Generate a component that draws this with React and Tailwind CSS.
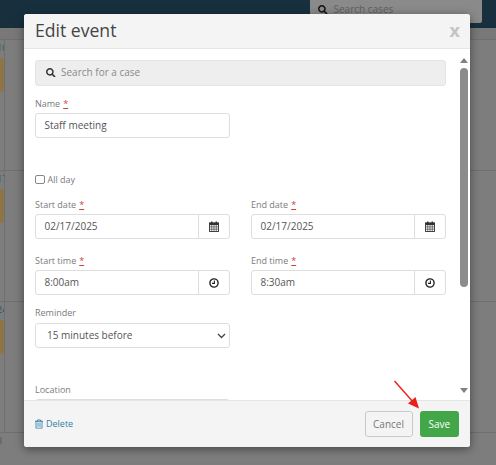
import React from "react";
import { FaSearch, FaRegTrashAlt } from "react-icons/fa";

const Label = ({ children, req }) => (
  <div className="h-[12px] text-[9px] leading-[12px] text-[#7b7b7b]">
    {children}
    {req && <span className="ml-[3px] text-[#c9453f] underline">*</span>}
  </div>
);

const Calendar = () => (
  <svg width="10" height="11" viewBox="0 0 11 12" className="text-[#333]">
    <rect x="0.5" y="2" width="10" height="9.5" fill="none" stroke="currentColor" />
    <rect x="0.5" y="2" width="10" height="2.5" fill="currentColor" />
    <rect x="2.2" y="0.5" width="1.6" height="2.5" fill="currentColor" />
    <rect x="7.2" y="0.5" width="1.6" height="2.5" fill="currentColor" />
    <path d="M0.5 6.5H10.5M0.5 9H10.5M3 4.5V11.5M5.5 4.5V11.5M8 4.5V11.5" stroke="currentColor" strokeWidth="0.7" />
  </svg>
);

const Clock = () => (
  <svg width="10" height="10" viewBox="0 0 10 10" className="text-[#222]">
    <circle cx="5" cy="5" r="4.1" fill="none" stroke="currentColor" strokeWidth="1.4" />
    <path d="M5.4 2.6V5.4H3" fill="none" stroke="currentColor" strokeWidth="1.1" />
  </svg>
);

const Field = ({ label, value, icon }) => (
  <div className="flex w-[195px] flex-col gap-[3.5px]">
    <Label req>{label}</Label>
    <div className="flex h-[25px] rounded-[3px] border border-[#dedede] bg-white">
      <div className="flex flex-1 items-center pl-[8.5px] text-[10px] text-[#555]">{value}</div>
      <div className="flex w-[31px] items-center justify-center border-l border-[#dedede]">{icon}</div>
    </div>
  </div>
);

const Week = ({ day }) => (
  <div className="grid h-[131px] grid-cols-[5px_156px_155px_1fr] border-b border-[#6f6f6f]">
    <div className="overflow-hidden border-r border-[#6f6f6f]">
      <div className="-ml-[3px] h-[18px] pt-[2px] text-[9px] leading-[12px] text-[#2a5468]">{day}</div>
      <div className="h-[34px] w-[4px] rounded-r-[2px] bg-[#8e7447]" />
    </div>
    <div className="border-r border-[#6f6f6f]" />
    <div className="border-r border-[#6f6f6f]" />
    <div />
  </div>
);

export default function App() {
  return (
    <div className="relative h-[465px] w-[496px] overflow-hidden bg-[#7d7d7d] font-['Open_Sans',sans-serif]">
      <div className="flex h-[28px] justify-end bg-[#18303e] pr-[14px]">
        <div className="flex h-[23px] w-[172px] items-center gap-[6px] rounded-b-[2px] bg-[#8a8a8a] pb-[4px] pl-[8px] text-[10px] text-[#5f5f5f]">
          <FaSearch className="h-[9.5px] w-[9.5px] text-[#111]" />
          Search cases
        </div>
      </div>
      <div className="h-[12px] border-b border-[#6f6f6f] bg-[#787878]" />
      <Week day="10" />
      <Week day="17" />
      <Week day="24" />
      <div className="-ml-[3px] pt-[2px] text-[9px] leading-[12px] text-[#555]">3</div>

      <div className="absolute left-[24px] top-[13.5px] flex h-[433.5px] w-[446px] flex-col overflow-hidden rounded-[3px] bg-white shadow-[0_2px_10px_rgba(0,0,0,0.45)]">
        <div className="flex h-[35px] shrink-0 items-center justify-between border-b border-[#e5e5e5] bg-[#f4f4f4] pl-[11px] pr-[10px]">
          <div className="text-[17.6px] leading-none text-[#444]">Edit event</div>
          <div className="pb-[1px] text-[18px] font-bold leading-none text-[#c4c4c4]">x</div>
        </div>

        <div className="relative min-h-0 flex-1 overflow-hidden">
          <div className="flex flex-col px-[11px] pt-[11px]">
            <div className="flex h-[26px] w-[411px] items-center gap-[5.5px] rounded-[3px] border border-[#e3e3e3] bg-[#eeeeee] pl-[10px] text-[10px] text-[#8a8a8a]">
              <FaSearch className="h-[9.5px] w-[9.5px] text-[#333]" />
              Search for a case
            </div>

            <div className="mt-[12px]"><Label req>Name</Label></div>
            <div className="mt-[3.5px] flex h-[25px] w-[195px] items-center rounded-[3px] border border-[#dedede] pl-[8.5px] text-[10px] text-[#555]">
              Staff meeting
            </div>

            <div className="mt-[35.5px] flex h-[12px] items-center gap-[3px]">
              <div className="h-[9.5px] w-[9.5px] rounded-[2px] border border-[#888] bg-white" />
              <span className="text-[9px] text-[#7b7b7b]">All day</span>
            </div>

            <div className="mt-[13px] flex gap-[21px]">
              <Field label="Start date" value="02/17/2025" icon={<Calendar />} />
              <Field label="End date" value="02/17/2025" icon={<Calendar />} />
            </div>
            <div className="mt-[15.5px] flex gap-[21px]">
              <Field label="Start time" value="8:00am" icon={<Clock />} />
              <Field label="End time" value="8:30am" icon={<Clock />} />
            </div>

            <div className="mt-[12px]"><Label>Reminder</Label></div>
            <div className="mt-[4px] flex h-[25px] w-[195px] items-center justify-between rounded-[3px] border border-[#dedede] pl-[11px] pr-[3px] text-[10px] text-[#555]">
              15 minutes before
              <svg width="9" height="6" viewBox="0 0 9 6">
                <path d="M1 1L4.5 4.5L8 1" fill="none" stroke="#444" strokeWidth="1.3" />
              </svg>
            </div>

            <div className="mt-[36px]"><Label>Location</Label></div>
            <div className="mt-[3px] h-[25px] w-[195px] rounded-[3px] border border-[#dedede]" />
          </div>

          <div className="absolute bottom-0 right-0 top-0 flex w-[13px] flex-col items-center bg-white pb-[7px] pt-[9px]">
            <div className="h-0 w-0 border-x-[4.5px] border-b-[5px] border-x-transparent border-b-[#808080]" />
            <div className="mt-[5px] h-[219px] w-[8px] rounded-[4px] bg-[#8c8c8c]" />
            <div className="mt-auto h-0 w-0 border-x-[4.5px] border-t-[5px] border-x-transparent border-t-[#808080]" />
          </div>
        </div>

        <div className="flex h-[47px] shrink-0 items-center justify-between border-t border-[#e5e5e5] bg-[#f4f4f4] pl-[11px] pr-[11px]">
          <div className="flex items-center gap-[3px] text-[9px] text-[#2f7fa8]">
            <FaRegTrashAlt className="h-[10px] w-[8px]" />
            Delete
          </div>
          <div className="flex gap-[7px]">
            <div className="flex h-[26px] w-[48px] items-center justify-center rounded-[3px] border border-[#c9c9c9] text-[10px] text-[#777]">Cancel</div>
            <div className="flex h-[26px] w-[39.5px] items-center justify-center rounded-[3px] bg-[#43a648] text-[10px] text-white">Save</div>
          </div>
        </div>
      </div>

      <svg className="absolute left-[390px] top-[376px]" width="34" height="36" viewBox="0 0 34 36">
        <line x1="4.5" y1="5" x2="24" y2="27" stroke="#e8201c" strokeWidth="1.4" />
        <path d="M29 32.5L18 27.5L25.5 21Z" fill="#e8201c" />
      </svg>
    </div>
  );
}
